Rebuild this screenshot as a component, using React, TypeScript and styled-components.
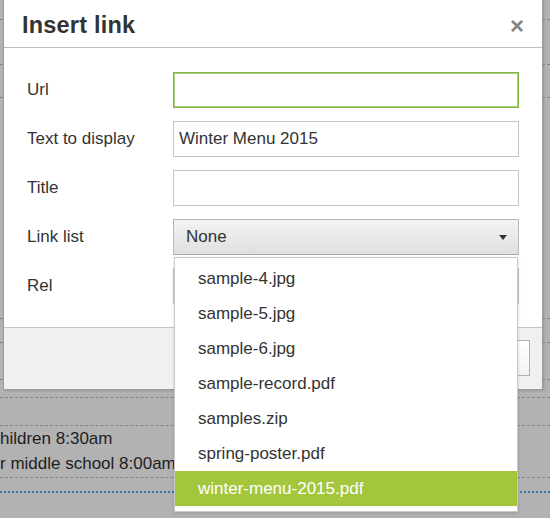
import React from "react";
import styled, { createGlobalStyle } from "styled-components";

const Global = createGlobalStyle`
  html, body { margin: 0; padding: 0; }
  body {
    width: 550px;
    height: 518px;
    overflow: hidden;
    background: #b2b2b2;
    font-family: "Liberation Sans", Arial, Helvetica, sans-serif;
  }
  * { box-sizing: border-box; }
`;

const Page = styled.div`
  position: relative;
  width: 550px;
  height: 518px;
  overflow: hidden;
  background: #b2b2b2;
`;

const Backdrop = styled.div`
  display: flex;
  flex-direction: column;
  width: 100%;
`;

const BgRow = styled.div<{ $h: number; $line?: "dashed" | "none" }>`
  height: ${(p) => p.$h}px;
  border-bottom: ${(p) => (p.$line === "none" ? "0" : "1px dashed #858585")};
  display: flex;
  flex-direction: column;
  justify-content: flex-start;
`;

const BgText = styled.div`
  font-size: 17px;
  line-height: 25px;
  color: #1e1e1e;
  white-space: nowrap;
`;

const BlueRule = styled.div`
  height: 0;
  border-top: 2px dotted #3a77b6;
`;

const Dialog = styled.div`
  position: absolute;
  left: 3px;
  top: -1px;
  width: 540px;
  border: 1px solid #9c9c9c;
  background: #fff;
  box-shadow: 1px 1px 2px rgba(0, 0, 0, 0.15);
  display: flex;
  flex-direction: column;
`;

const Header = styled.div`
  height: 48px;
  border-bottom: 1px solid #bdbdbd;
  display: flex;
  align-items: center;
  justify-content: space-between;
  padding: 3px 18px 0 18px;
`;

const Title = styled.div`
  font-size: 23.5px;
  font-weight: bold;
  color: #333;
  letter-spacing: 0.2px;
`;

const Close = styled.div`
  font-size: 24px;
  font-weight: bold;
  color: #858585;
  line-height: 1;
  margin-top: 2px;
`;

const Body = styled.div`
  padding: 24px 23px 23px 23px;
  display: flex;
  flex-direction: column;
  gap: 13px;
`;

const Row = styled.div`
  display: grid;
  grid-template-columns: 146px 1fr;
  align-items: center;
  height: 36px;
`;

const Label = styled.label`
  font-size: 17px;
  color: #333;
`;

const Field = styled.div`
  position: relative;
  height: 36px;
`;

const Input = styled.div<{ $focused?: boolean }>`
  height: 36px;
  border: 1px solid ${(p) => (p.$focused ? "#86b443" : "#c5c5c5")};
  box-shadow: ${(p) => (p.$focused ? "inset 0 0 0 1px #a9cd7a" : "none")};
  background: #fff;
  font-size: 17px;
  color: #333;
  padding: 0 5px;
  display: flex;
  align-items: center;
`;

const Select = styled.div`
  height: 36px;
  border: 1px solid #b9b9b9;
  border-bottom-color: #a8a8a8;
  background: linear-gradient(#f3f3f3, #dfdfdf);
  font-size: 17px;
  color: #333;
  padding: 0 11px 0 12px;
  display: flex;
  align-items: center;
  justify-content: space-between;
`;

const Caret = styled.span`
  width: 0;
  height: 0;
  border-left: 4px solid transparent;
  border-right: 4px solid transparent;
  border-top: 5px solid #333;
`;

const Menu = styled.div`
  position: absolute;
  left: 1px;
  right: 1px;
  top: 38px;
  background: #fff;
  border: 1px solid #c8c8c8;
  box-shadow: 0 1px 3px rgba(0, 0, 0, 0.15);
  padding: 3px 0 5px;
  z-index: 5;
  display: flex;
  flex-direction: column;
`;

const Item = styled.div<{ $active?: boolean }>`
  height: 35px;
  line-height: 35px;
  padding-left: 23px;
  font-size: 17px;
  color: ${(p) => (p.$active ? "#fff" : "#333")};
  background: ${(p) => (p.$active ? "#a4c63d" : "transparent")};
`;

const Footer = styled.div`
  height: 62px;
  border-top: 1px solid #c5c5c5;
  background: #f0f0f0;
  display: flex;
  justify-content: flex-end;
  align-items: flex-start;
  gap: 8px;
  padding: 12px 12px 0 0;
`;

const Button = styled.div`
  height: 36px;
  padding: 0 16px;
  border: 1px solid #b1b1b1;
  background: linear-gradient(#fff, #f3f3f3);
  font-size: 17px;
  color: #333;
  display: flex;
  align-items: center;
`;

const files = [
  "sample-4.jpg",
  "sample-5.jpg",
  "sample-6.jpg",
  "sample-record.pdf",
  "samples.zip",
  "spring-poster.pdf",
  "winter-menu-2015.pdf",
];

export default function App() {
  return (
    <Page>
      <Global />
      <Backdrop>
        <BgRow $h={20} />
        <BgRow $h={45} />
        <BgRow $h={33} />
        <BgRow $h={221} />
        <BgRow $h={24} />
        <BgRow $h={37} />
        <BgRow $h={18} />
        <BgRow $h={28} />
        <BgRow $h={52}>
          <BgText>hildren 8:30am</BgText>
          <BgText>r middle school 8:00am</BgText>
        </BgRow>
        <BgRow $h={13} $line="none" />
        <BlueRule />
      </Backdrop>

      <Dialog>
        <Header>
          <Title>Insert link</Title>
          <Close>×</Close>
        </Header>
        <Body>
          <Row>
            <Label>Url</Label>
            <Input $focused />
          </Row>
          <Row>
            <Label>Text to display</Label>
            <Input>Winter Menu 2015</Input>
          </Row>
          <Row>
            <Label>Title</Label>
            <Input />
          </Row>
          <Row>
            <Label>Link list</Label>
            <Field>
              <Select>
                <span>None</span>
                <Caret />
              </Select>
              <Menu>
                {files.map((f) => (
                  <Item key={f} $active={f === "winter-menu-2015.pdf"}>
                    {f}
                  </Item>
                ))}
              </Menu>
            </Field>
          </Row>
          <Row>
            <Label>Rel</Label>
            <Input />
          </Row>
        </Body>
        <Footer>
          <Button>Ok</Button>
          <Button>Cancel</Button>
        </Footer>
      </Dialog>
    </Page>
  );
}
